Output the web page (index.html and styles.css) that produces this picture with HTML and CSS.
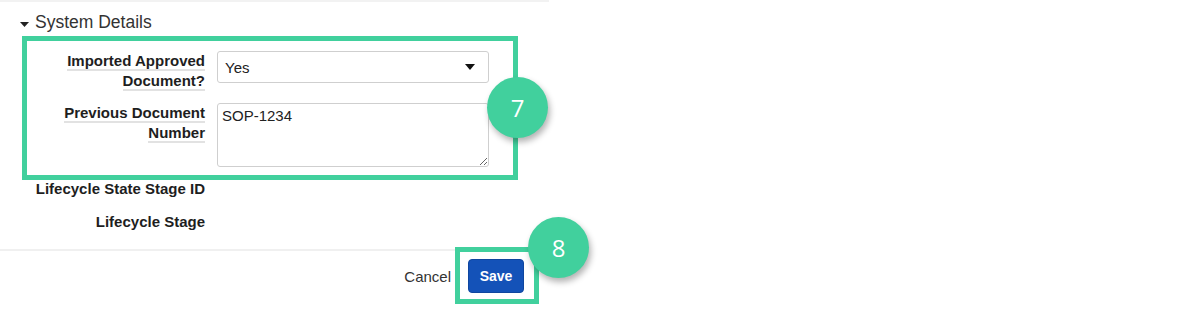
FILE: index.html
```html
<!DOCTYPE html>
<html lang="en">
<head>
<meta charset="utf-8">
<title>System Details</title>
<link rel="stylesheet" href="styles.css">
</head>
<body>
<div class="page">
  <div class="topline"></div>
  <div class="section-head">
    <svg class="caret" width="9" height="5" viewBox="0 0 9 5"><path d="M0 0H9L4.5 5Z" fill="#222"/></svg>
    <span class="section-title">System Details</span>
  </div>
  <div class="highlight">
    <div class="row">
      <div class="label"><span class="uline">Imported Approved Document?</span></div>
      <div class="select">
        <span class="select-value">Yes</span>
        <svg class="select-arrow" width="10" height="6" viewBox="0 0 10 6"><path d="M0 0H10L5 6Z" fill="#111"/></svg>
      </div>
    </div>
    <div class="row row-second">
      <div class="label"><span class="uline">Previous Document Number</span></div>
      <textarea class="textarea" readonly>SOP-1234</textarea>
    </div>
    <div class="badge badge-seven">7</div>
  </div>
  <div class="plain-row"><div class="label">Lifecycle State Stage ID</div></div>
  <div class="plain-row"><div class="label">Lifecycle Stage</div></div>
  <div class="separator"></div>
  <div class="footer">
    <span class="cancel">Cancel</span>
    <span class="save-wrap">
      <button class="save" type="button">Save</button>
      <span class="badge badge-eight">8</span>
    </span>
  </div>
</div>
</body>
</html>
```
FILE: styles.css
```css
html, body {
  margin: 0;
  padding: 0;
  background: #ffffff;
}
body {
  font-family: "Liberation Sans", Arial, sans-serif;
  color: #222;
}
.page {
  width: 549px;
}
.topline {
  height: 2px;
  background: #f2f2f2;
}
.section-head {
  display: flex;
  align-items: center;
  margin-top: 8px;
  height: 24px;
  line-height: 24px;
}
.caret {
  display: block;
  margin-left: 20px;
  margin-right: 6px;
  margin-top: 5px;
}
.section-title {
  font-size: 17.5px;
  color: #333;
}
.highlight {
  position: relative;
  margin-top: 2px;
  margin-left: 22px;
  width: 486px;
  border: 5px solid #41d09d;
  padding: 10px 0 8px 0;
}
.row {
  display: flex;
  gap: 12px;
  align-items: flex-start;
}
.row-second {
  margin-top: 12px;
}
.label {
  width: 178px;
  flex-shrink: 0;
  text-align: right;
  font-weight: bold;
  font-size: 15px;
  line-height: 20px;
  color: #1e1e1e;
}
.uline {
  border-bottom: 2px solid #e2e2e2;
}
.select {
  width: 272px;
  height: 32px;
  box-sizing: border-box;
  border: 1px solid #cfcfcf;
  border-radius: 3px;
  display: flex;
  align-items: center;
  justify-content: space-between;
  padding: 0 13px 0 7px;
  font-size: 15px;
  color: #222;
}
.select-arrow {
  display: block;
}
.textarea {
  display: block;
  margin: 0;
  width: 272px;
  height: 64px;
  box-sizing: border-box;
  border: 1px solid #cfcfcf;
  border-radius: 3px;
  padding: 3px 4px;
  font-family: "Liberation Sans", Arial, sans-serif;
  font-size: 15px;
  color: #222;
  resize: vertical;
  outline: none;
}
.plain-row {
  padding-left: 27px;
  padding-bottom: 16px;
}
.plain-row .label {
  line-height: 17px;
}
.separator {
  margin-top: 3px;
  height: 2px;
  background: #f0f0f0;
}
.footer {
  display: flex;
  justify-content: flex-end;
  align-items: center;
  padding: 8px 25px 21px 0;
}
.cancel {
  font-size: 15px;
  color: #333;
  margin-right: 17px;
}
.save-wrap {
  position: relative;
  display: block;
}
.save-wrap::after {
  content: "";
  position: absolute;
  left: -13px;
  top: -12px;
  right: -15px;
  bottom: -11px;
  border: 5px solid #41d09d;
  pointer-events: none;
}
.save {
  display: block;
  width: 56px;
  height: 34px;
  box-sizing: border-box;
  border: 1px solid #0f469f;
  border-radius: 4px;
  background: #1452b8;
  color: #ffffff;
  font-family: "Liberation Sans", Arial, sans-serif;
  font-weight: bold;
  font-size: 14px;
  padding: 0;
}
.badge {
  position: absolute;
  z-index: 2;
  width: 61px;
  height: 61px;
  border-radius: 50%;
  background: #41d09d;
  color: #ffffff;
  font-family: "Open Sans", sans-serif;
  font-size: 24px;
  display: flex;
  align-items: center;
  justify-content: center;
  box-shadow: 2px 4px 6px rgba(0, 0, 0, 0.3);
}
.badge-seven {
  left: 460px;
  top: 36px;
}
.badge-eight {
  left: 60px;
  top: -42px;
}
```
